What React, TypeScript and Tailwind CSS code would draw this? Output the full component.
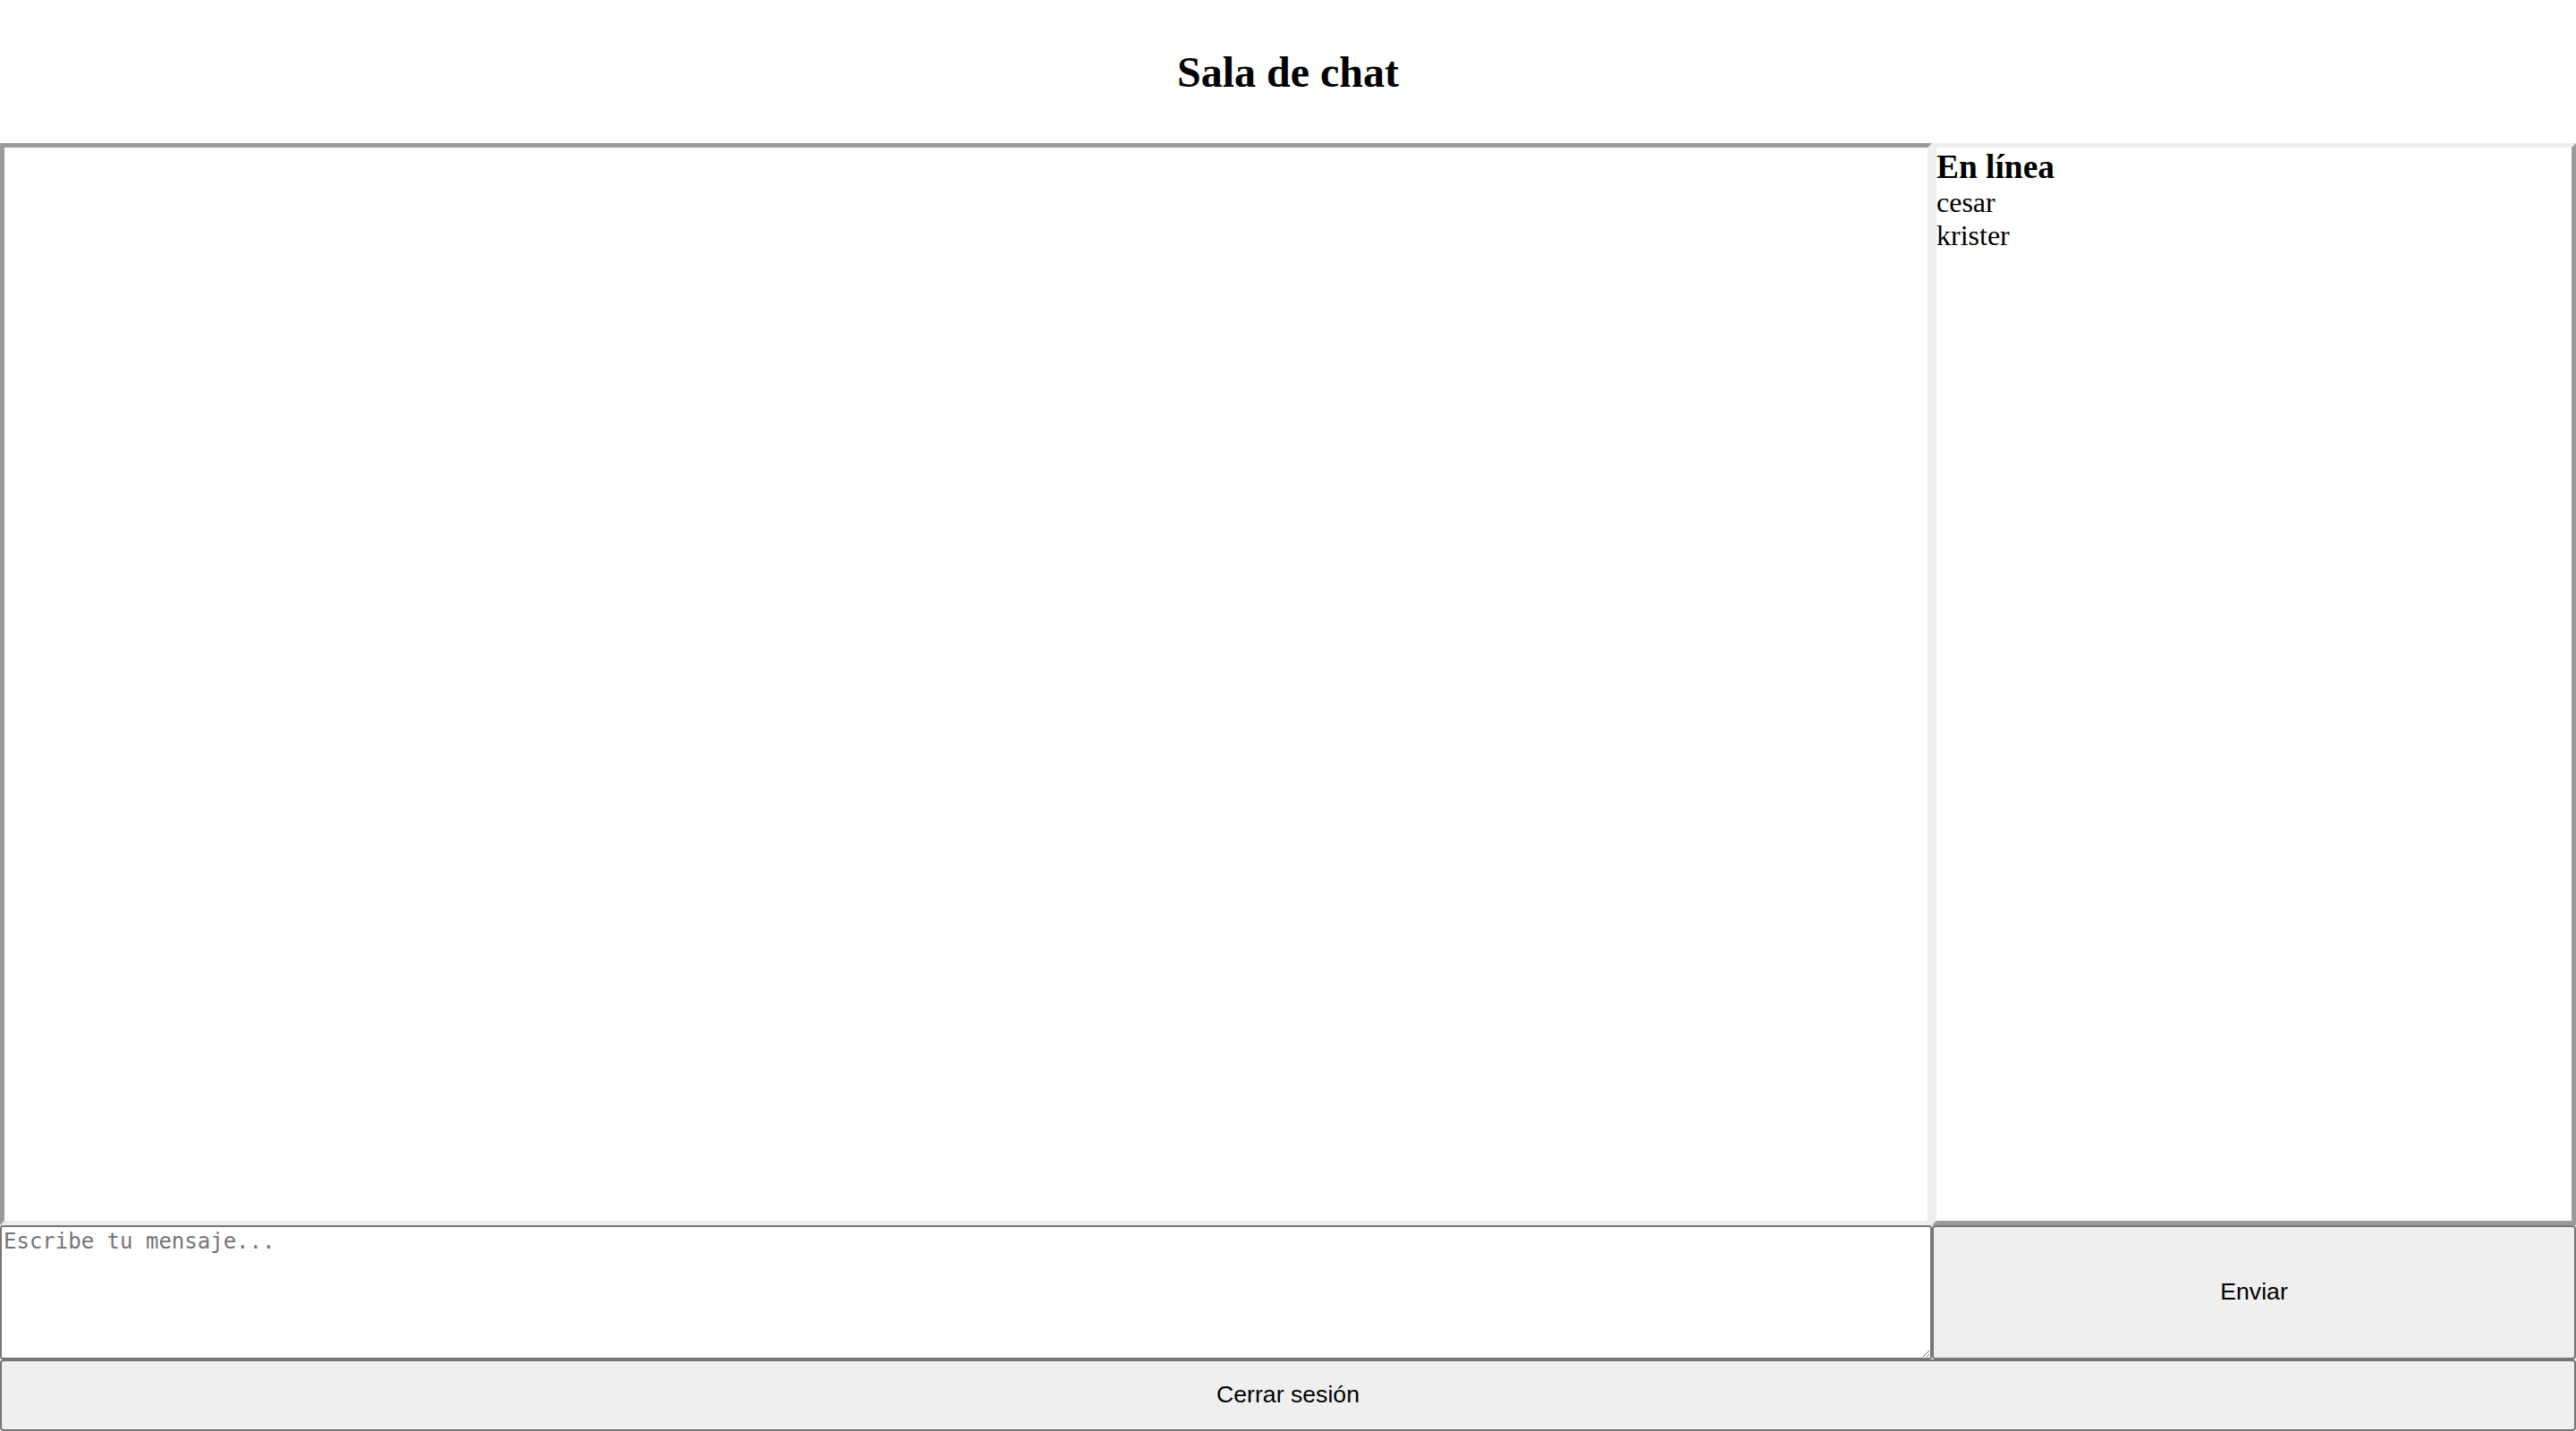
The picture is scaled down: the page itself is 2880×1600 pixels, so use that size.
import React, { useState } from 'react';

const USERS = ['cesar', 'krister'];

const App: React.FC = () => {
  const [message, setMessage] = useState('');

  return (
    <div className="flex h-[1600px] w-full flex-col bg-white text-black font-['Liberation_Serif',serif]">
      <header className="h-[160px] shrink-0 pt-[54px] text-center">
        <h1 className="text-[48px] font-bold leading-[53px]">Sala de chat</h1>
      </header>

      <div className="flex h-[1210px] shrink-0">
        <div className="w-3/4 border-[5px] border-t-[#9a9a9a] border-l-[#9a9a9a] border-r-[#eeeeee] border-b-[#eeeeee] bg-white" />
        <div className="w-1/4 border-[5px] border-t-[#eeeeee] border-l-[#eeeeee] border-r-[#9a9a9a] border-b-[#9a9a9a] bg-white">
          <h3 className="text-[37.4px] font-bold leading-[43px]">En línea</h3>
          <ul>
            {USERS.map((user) => (
              <li key={user} className="text-[32px] leading-[37px]">{user}</li>
            ))}
          </ul>
        </div>
      </div>

      <div className="flex h-[150px] shrink-0">
        <textarea
          className="w-3/4 rounded-[3px] border-2 border-[#767676] bg-white p-[2px] text-[24px] leading-[28px] font-['DejaVu_Sans_Mono',monospace] placeholder:text-[#757575] focus:outline-none"
          placeholder="Escribe tu mensaje..."
          value={message}
          onChange={(e) => setMessage(e.target.value)}
        />
        <button className="w-1/4 rounded-[4px] border-2 border-[#767676] bg-[#efefef] pb-[2px] text-[26.67px] font-['Liberation_Sans',Arial,sans-serif]">
          Enviar
        </button>
      </div>

      <button className="h-[80px] w-full shrink-0 rounded-[4px] border-2 border-[#767676] bg-[#efefef] pb-[2px] text-[26.67px] font-['Liberation_Sans',Arial,sans-serif]">
        Cerrar sesión
      </button>
    </div>
  );
};

export default App;
